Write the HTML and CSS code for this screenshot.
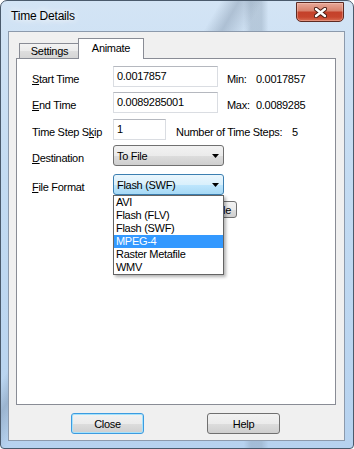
FILE: index.html
```html
<!doctype html>
<html lang="en">
<head>
    <meta charset="UTF-8">
    <title>Time Details</title>
    <link rel="stylesheet" href="styles.css">
</head>
<body>
    <div class="window">
        <div class="titlebar">
            <span class="title">Time Details</span>
            <div class="close-btn" title="Close">
                <svg width="13" height="11" viewBox="0 0 13 11">
                    <path d="M2 2L11 9M11 2L2 9" stroke="#4a1c14" stroke-width="4.4" stroke-linecap="round"/>
                    <path d="M2 2L11 9M11 2L2 9" stroke="#fff" stroke-width="2.4" stroke-linecap="round"/>
                </svg>
            </div>
        </div>
        <div class="client">
            <div class="tab-strip">
                <div class="tab">Settings</div>
                <div class="tab active">Animate</div>
            </div>
            <div class="panel">
                <div class="row r1">
                    <span class="lbl"><u>S</u>tart Time</span>
                    <div class="txt">0.0017857</div>
                    <span class="extra"><span class="key">Min:</span>0.0017857</span>
                </div>
                <div class="row r2">
                    <span class="lbl"><u>E</u>nd Time</span>
                    <div class="txt">0.0089285001</div>
                    <span class="extra"><span class="key">Max:</span>0.0089285</span>
                </div>
                <div class="row r3">
                    <span class="lbl">Time Step S<u>k</u>ip</span>
                    <div class="txt short">1</div>
                    <span class="extra steps"><span class="key">Number of Time Steps:</span>5</span>
                </div>
                <div class="row r4">
                    <span class="lbl"><u>D</u>estination</span>
                    <div class="select">To File<svg width="7" height="4" viewBox="0 0 7 4"><path d="M0 0H7L3.5 4Z"/></svg></div>
                </div>
                <div class="row r5">
                    <span class="lbl"><u>F</u>ile Format</span>
                    <div class="combo">
                        <div class="select focus">Flash (SWF)<svg width="7" height="4" viewBox="0 0 7 4"><path d="M0 0H7L3.5 4Z"/></svg></div>
                        <div class="list">
                            <div class="item">AVI</div>
                            <div class="item">Flash (FLV)</div>
                            <div class="item">Flash (SWF)</div>
                            <div class="item sel">MPEG-4</div>
                            <div class="item">Raster Metafile</div>
                            <div class="item">WMV</div>
                        </div>
                    </div>
                </div>
                <div class="row r6">
                    <div class="btn small">Select File</div>
                </div>
            </div>
            <div class="buttons">
                <div class="btn default">Close</div>
                <div class="btn">Help</div>
            </div>
        </div>
    </div>
</body>
</html>
```

FILE: styles.css
```css
* {
    margin: 0;
    padding: 0;
    box-sizing: border-box;
}

html, body {
    width: 354px;
    height: 449px;
    overflow: hidden;
    background: #fff;
}

body {
    font-family: "Liberation Sans", Arial, sans-serif;
    font-size: 11px;
    letter-spacing: -0.3px;
    color: #000;
}

.window {
    width: 354px;
    height: 449px;
    border: 1px solid #4a5a6c;
    border-radius: 7px 7px 4px 4px;
    padding: 0 8px 7px 7px;
    display: flex;
    flex-direction: column;
    background:
        linear-gradient(120deg, transparent 36%, rgba(80, 100, 125, 0.28) 39%, transparent 43%),
        linear-gradient(90deg, transparent 69%, rgba(120, 140, 160, 0.3) 71%, rgba(120, 140, 160, 0.3) 74%, transparent 76%),
        linear-gradient(180deg, #d3e4f5 0%, #c3dbf2 40%, #b6d2ef 100%);
}

.titlebar {
    height: 30px;
    display: flex;
    justify-content: space-between;
    align-items: flex-start;
}

.title {
    font-size: 12px;
    letter-spacing: -0.2px;
    line-height: 14px;
    padding: 8px 0 0 3px;
    text-shadow: 0 0 6px #fff, 0 0 10px #fff;
}

.close-btn {
    width: 48px;
    height: 20px;
    margin: 1px 1px 0 0;
    border: 1px solid #5e2a22;
    border-radius: 0 0 5px 5px;
    background: linear-gradient(180deg, #e8a899 0%, #d9836e 42%, #c4412a 52%, #c7452d 78%, #d86d52 100%);
    box-shadow: inset 0 0 0 1px rgba(255, 220, 210, 0.35);
    display: flex;
    align-items: center;
    justify-content: center;
}

.client {
    flex: 1;
    border: 1px solid #8c9aac;
    background: #f0f0f0;
    padding: 6px 8px 0 7px;
    display: flex;
    flex-direction: column;
}

.tab-strip {
    height: 20px;
    display: flex;
    align-items: flex-end;
    padding-left: 3px;
}

.tab {
    width: 61px;
    height: 15px;
    border: 1px solid #898c95;
    border-bottom: none;
    background: linear-gradient(180deg, #f3f3f3 0%, #ebebeb 50%, #dedede 51%, #d6d6d6 100%);
    text-align: center;
    line-height: 15px;
}

.tab.active {
    width: 66px;
    height: 21px;
    margin-left: -2px;
    margin-bottom: -1px;
    background: #fff;
    line-height: 19px;
    position: relative;
    z-index: 1;
}

.panel {
    width: 320px;
    height: 347px;
    border: 1px solid #898c95;
    background: #fff;
    padding: 7px 0 0 15px;
}

.row {
    display: flex;
    align-items: flex-start;
    height: 21px;
}

.r2 { margin-top: 5px; }
.r3 { margin-top: 6px; }
.r4 { margin-top: 5px; }
.r5 { margin-top: 8px; }

.r6 {
    margin-top: 6px;
    height: 17px;
    padding-left: 145px;
}

.lbl {
    width: 81px;
    line-height: 21px;
    padding-top: 3px;
    white-space: nowrap;
}

.txt {
    width: 105px;
    height: 21px;
    border: 1px solid #dadde2;
    border-top-color: #b5b8bf;
    padding-left: 3px;
    line-height: 19px;
    white-space: nowrap;
    overflow: hidden;
}

.txt.short {
    width: 53px;
}

.extra {
    margin-left: 9px;
    line-height: 21px;
    padding-top: 3px;
    white-space: nowrap;
}

.extra .key {
    display: inline-block;
    width: 29px;
}

.extra.steps {
    margin-left: 10px;
}

.extra.steps .key {
    width: 116px;
}

.combo {
    position: relative;
}

.select {
    width: 111px;
    height: 21px;
    border: 1px solid #707070;
    border-radius: 3px;
    padding: 0 4px 0 3px;
    background: linear-gradient(180deg, #f2f2f2 0%, #ebebeb 50%, #dddddd 51%, #cfcfcf 100%);
    display: flex;
    align-items: center;
    justify-content: space-between;
    white-space: nowrap;
}

.select.focus {
    border-color: #3c7fb1;
    background: linear-gradient(180deg, #eaf6fd 0%, #d9f0fc 50%, #bee6fd 51%, #a7d9f5 100%);
}

.list {
    position: absolute;
    top: 100%;
    left: 0;
    width: 111px;
    border: 1px solid #646464;
    background: #fff;
    box-shadow: 2px 2px 3px rgba(0, 0, 0, 0.3);
    z-index: 2;
}

.item {
    height: 13px;
    line-height: 13px;
    padding-left: 2px;
    white-space: nowrap;
}

.item.sel {
    background: #3399ff;
    color: #fff;
}

.btn {
    width: 73px;
    height: 21px;
    border: 1px solid #707070;
    border-radius: 3px;
    background: linear-gradient(180deg, #f2f2f2 0%, #ebebeb 50%, #dddddd 51%, #cfcfcf 100%);
    display: flex;
    align-items: center;
    justify-content: center;
    white-space: nowrap;
}

.btn.small {
    width: 60px;
    height: 17px;
}

.btn.default {
    border-color: #3c9be0;
    box-shadow: inset 0 0 0 1px #a6e2fb;
}

.buttons {
    display: flex;
    gap: 63px;
    padding: 8px 0 0 55px;
}
```
